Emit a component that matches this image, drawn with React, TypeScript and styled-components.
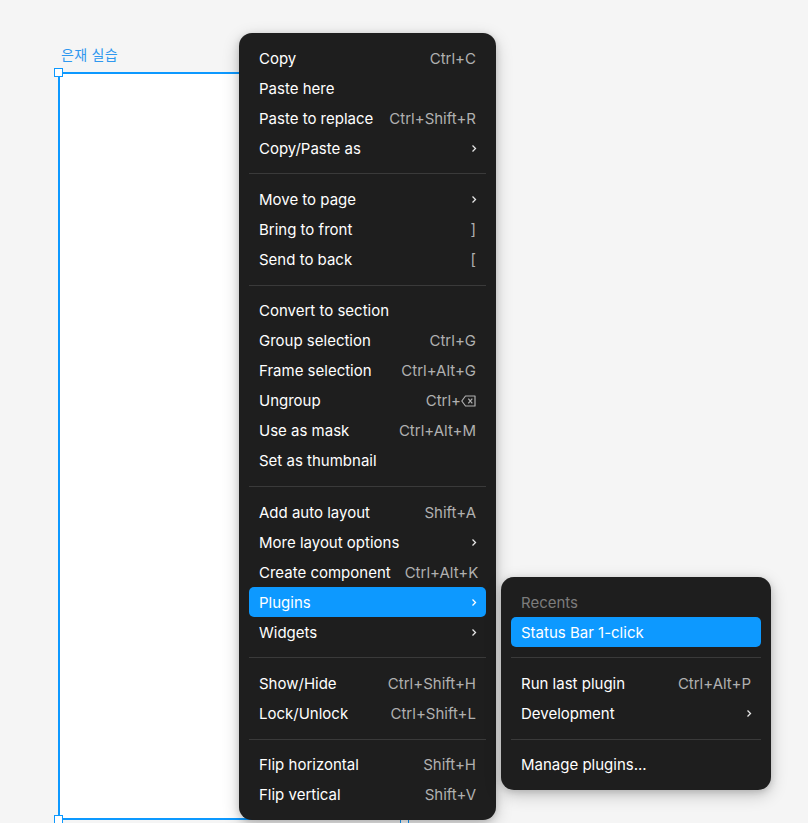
import React from "react";
import styled, { createGlobalStyle } from "styled-components";

const Global = createGlobalStyle`
  html, body { margin: 0; padding: 0; background: #f5f5f5; }
  body { font-family: Inter, "Noto Sans", "Noto Sans CJK KR", sans-serif; -webkit-font-smoothing: antialiased; }
`;

const Canvas = styled.div`
  position: relative;
  width: 808px;
  height: 823px;
  overflow: hidden;
  background: #f5f5f5;
`;

/* a frame node on the free canvas */
const FrameNode = styled.div`
  position: absolute;
  left: 58px;
  top: 45px;
  display: flex;
  flex-direction: column;
  gap: 8px;
`;

const FrameLabel = styled.div`
  padding-left: 3px;
  font-family: Inter, "Noto Sans CJK KR", sans-serif;
  font-size: 14px;
  line-height: 19px;
  color: #2f98ef;
  letter-spacing: 0.3px;
`;

const FrameBox = styled.div`
  position: relative;
  width: 343px;
  height: 744px;
  background: #ffffff;
  border: 2px solid #0d99ff;
`;

const Handle = styled.div<{ $right?: boolean; $bottom?: boolean }>`
  position: absolute;
  ${(p) => (p.$right ? "right: -6px;" : "left: -6px;")}
  ${(p) => (p.$bottom ? "bottom: -6px;" : "top: -6px;")}
  width: 7px;
  height: 7px;
  background: #ffffff;
  border: 1.5px solid #0d99ff;
`;

/* context menu lies over the canvas */
const MenuAnchor = styled.div`
  position: absolute;
  left: 239px;
  top: 33px;
`;

const Menu = styled.div<{ $w: number }>`
  width: ${(p) => p.$w}px;
  box-sizing: border-box;
  padding: 10px;
  background: #1e1e1e;
  border-radius: 13px;
  box-shadow: 0 5px 17px rgba(0, 0, 0, 0.2), 0 2px 7px rgba(0, 0, 0, 0.15);
  display: flex;
  flex-direction: column;
`;

const SubMenuSlot = styled.div`
  position: absolute;
  left: calc(100% + 15px);
  top: -10px;
  z-index: 2;
`;

const Item = styled.div<{ $active?: boolean; $header?: boolean }>`
  position: relative;
  display: flex;
  align-items: center;
  justify-content: space-between;
  height: 30px;
  padding: 0 10px;
  border-radius: 5px;
  font-size: 15px;
  color: ${(p) => (p.$header ? "#7c7c7c" : "#ffffff")};
  background: ${(p) => (p.$active ? "#0d99ff" : "transparent")};
  white-space: nowrap;
`;

const Shortcut = styled.span<{ $active?: boolean }>`
  color: ${(p) => (p.$active ? "#ffffff" : "#b0b0b0")};
  display: flex;
  align-items: center;
  margin-left: 14px;
`;

const Separator = styled.div`
  height: 21.4px;
  display: flex;
  align-items: center;
  &::after {
    content: "";
    flex: 1;
    height: 1px;
    background: #3a3a3a;
  }
`;

const Chevron = ({ color = "#e6e6e6" }: { color?: string }) => (
  <svg width="6" height="9" viewBox="0 0 6 9" style={{ marginRight: -1 }}>
    <path d="M1.5 1.5 L4.5 4.5 L1.5 7.5" fill="none" stroke={color} strokeWidth="1.3" />
  </svg>
);

const Backspace = () => (
  <svg width="15" height="12" viewBox="0 0 15 12">
    <path d="M4.5 1 H14 V11 H4.5 L0.8 6 Z" fill="none" stroke="#b0b0b0" strokeWidth="1.2" strokeLinejoin="round" />
    <path d="M7.3 3.6 L11.3 8.4 M11.3 3.6 L7.3 8.4" stroke="#b0b0b0" strokeWidth="1.2" />
  </svg>
);

type Entry =
  | { sep: true }
  | {
      label: string;
      shortcut?: React.ReactNode;
      sub?: boolean;
      active?: boolean;
      header?: boolean;
      children?: Entry[];
    };

const subItems: Entry[] = [
  { label: "Recents", header: true },
  { label: "Status Bar 1-click", active: true },
  { sep: true },
  { label: "Run last plugin", shortcut: "Ctrl+Alt+P" },
  { label: "Development", sub: true },
  { sep: true },
  { label: "Manage plugins..." },
];

const mainItems: Entry[] = [
  { label: "Copy", shortcut: "Ctrl+C" },
  { label: "Paste here" },
  { label: "Paste to replace", shortcut: "Ctrl+Shift+R" },
  { label: "Copy/Paste as", sub: true },
  { sep: true },
  { label: "Move to page", sub: true },
  { label: "Bring to front", shortcut: "]" },
  { label: "Send to back", shortcut: "[" },
  { sep: true },
  { label: "Convert to section" },
  { label: "Group selection", shortcut: "Ctrl+G" },
  { label: "Frame selection", shortcut: "Ctrl+Alt+G" },
  { label: "Ungroup", shortcut: <>Ctrl+<Backspace /></> },
  { label: "Use as mask", shortcut: "Ctrl+Alt+M" },
  { label: "Set as thumbnail" },
  { sep: true },
  { label: "Add auto layout", shortcut: "Shift+A" },
  { label: "More layout options", sub: true },
  { label: "Create component", shortcut: "Ctrl+Alt+K" },
  { label: "Plugins", sub: true, active: true, children: subItems },
  { label: "Widgets", sub: true },
  { sep: true },
  { label: "Show/Hide", shortcut: "Ctrl+Shift+H" },
  { label: "Lock/Unlock", shortcut: "Ctrl+Shift+L" },
  { sep: true },
  { label: "Flip horizontal", shortcut: "Shift+H" },
  { label: "Flip vertical", shortcut: "Shift+V" },
];

const renderEntries = (entries: Entry[]): React.ReactNode =>
  entries.map((e, i) =>
    "sep" in e ? (
      <Separator key={i} />
    ) : (
      <Item key={i} $active={e.active} $header={e.header}>
        <span>{e.label}</span>
        {e.sub ? (
          <Chevron color={e.active ? "#ffffff" : "#e6e6e6"} />
        ) : e.shortcut ? (
          <Shortcut $active={e.active}>{e.shortcut}</Shortcut>
        ) : null}
        {e.children ? (
          <SubMenuSlot>
            <Menu $w={270}>{renderEntries(e.children)}</Menu>
          </SubMenuSlot>
        ) : null}
      </Item>
    )
  );

export default function App() {
  return (
    <Canvas>
      <Global />
      <FrameNode>
        <FrameLabel>은재 실습</FrameLabel>
        <FrameBox>
          <Handle />
          <Handle $right />
          <Handle $bottom />
          <Handle $right $bottom />
        </FrameBox>
      </FrameNode>
      <MenuAnchor>
        <Menu $w={257}>{renderEntries(mainItems)}</Menu>
      </MenuAnchor>
    </Canvas>
  );
}
